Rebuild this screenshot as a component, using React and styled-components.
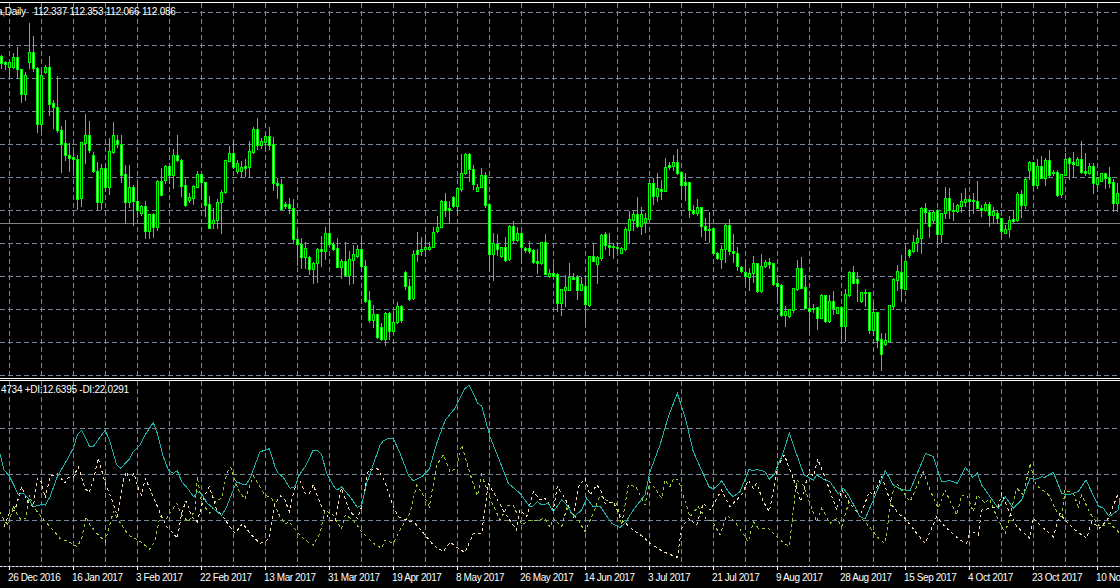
import React from 'react';
import styled, { createGlobalStyle } from 'styled-components';

const GlobalStyle = createGlobalStyle`
  html, body {
    margin: 0;
    background: #000;
    overflow: hidden;
  }
`

const Terminal = styled.div`
  width: 1120px;
  height: 588px;
  padding-top: 2px;
  box-sizing: border-box;
  background: #000;
  overflow: hidden;
  display: flex;
  flex-direction: column;
  font-family: "Liberation Sans", Arial, sans-serif;
  font-size: 10px;
  letter-spacing: -0.4px;
  color: #fff;
`

const PricePane = styled.div`
  position: relative;
  height: 375px;
  border-top: 1px solid #fff;
`

const IndicatorPane = styled.div`
  position: relative;
  height: 185px;
  border-top: 3px double #fff;
`

const ChartSvg = styled.svg`
  display: block;
  width: 1120px;
  height: 100%;
  shape-rendering: crispEdges;
`

const Legend = styled.div`
  position: absolute;
  top: 3px;
  left: ${props => props.$left}px;
  line-height: 12px;
  letter-spacing: -0.25px;
  white-space: pre;
`

const GridLine = styled.line`
  stroke: #778899;
  stroke-width: 1;
  stroke-dasharray: 5 3;
`

const BidLine = styled.line`
  stroke: #808080;
  stroke-width: 1;
`

const Wick = styled.line`
  stroke: #00ff00;
  stroke-width: 1;
`

const Body = styled.rect`
  fill: ${props => (props.$bear ? '#fff' : '#000')};
  stroke: #00ff00;
  stroke-width: 1;
`

const Trace = styled.polyline`
  fill: none;
  stroke: ${props => props.$color};
  stroke-width: 1;
  stroke-dasharray: ${props => (props.$dashed ? '3 3' : 'none')};
`

const TimeAxis = styled.div`
  display: flex;
  height: 22px;
  flex-shrink: 0;
  position: relative;
  background: repeating-linear-gradient(90deg, #dfe4ea 0 2px, #778899 2px 4px) top / 100% 1px no-repeat;
`

const TimeLabel = styled.div`
  position: relative;
  width: 64px;
  flex-shrink: 0;
  box-sizing: border-box;
  padding: 6px 0 0 8px;
  line-height: 12px;
  white-space: nowrap;

  &::before {
    content: '';
    position: absolute;
    left: 9px;
    top: 0;
    width: 1px;
    height: 4px;
    background: #fff;
  }
`

// bodyTop, bodyBottom, wickTop, wickBottom, bear - one row per daily bar, 4px apart
const candles = [
  [56,63,55,68,1],[62,64,61,69,1],[62,67,62,77,0],[57,67,53,68,0],[57,69,47,78,1],[69,94,69,102,1],[75,94,72,100,0],[52,62,23,68,0],
  [52,68,36,71,1],[68,124,67,132,1],[75,124,70,130,0],[67,72,65,73,0],[67,104,56,115,1],[103,107,100,128,1],[107,130,76,132,1],[130,144,126,172,1],
  [143,155,120,160,1],[155,158,143,171,1],[157,159,150,170,1],[159,199,155,209,1],[142,198,142,206,0],[135,143,114,163,0],[135,150,121,152,1],[155,171,152,172,1],
  [171,202,162,209,1],[168,202,164,209,0],[168,187,164,190,1],[151,187,138,194,0],[135,152,122,153,0],[140,144,135,147,1],[144,175,135,182,1],[174,202,165,223,1],
  [187,202,165,207,0],[187,201,185,225,1],[201,210,181,217,1],[206,213,205,215,0],[206,231,201,238,1],[214,231,214,238,0],[214,227,213,237,1],[181,227,180,230,0],
  [181,195,168,195,1],[166,180,165,183,0],[166,175,165,183,1],[155,175,149,188,0],[155,160,135,161,1],[160,186,159,196,1],[185,205,179,206,1],[197,200,193,202,0],
  [186,198,185,204,0],[174,187,171,187,0],[174,182,174,198,1],[182,205,182,216,1],[204,228,196,228,1],[220,223,208,228,0],[202,220,199,228,0],[192,202,190,233,0],
  [160,192,160,193,0],[153,161,146,161,0],[153,167,141,168,1],[163,171,160,173,0],[167,171,161,177,0],[166,168,159,176,1],[151,167,141,177,0],[129,152,127,153,0],
  [129,145,118,149,1],[141,145,138,148,0],[136,142,133,149,0],[136,145,127,149,1],[144,183,137,190,1],[183,185,178,198,1],[184,209,179,210,1],[204,206,202,208,1],
  [204,208,198,213,1],[208,239,199,243,1],[239,244,230,265,1],[244,257,238,268,1],[248,257,242,268,0],[257,269,256,274,1],[263,269,262,283,0],[249,263,248,282,0],
  [249,251,236,266,1],[233,251,227,259,0],[233,244,218,245,1],[244,249,242,250,1],[248,267,238,267,1],[261,267,259,278,0],[261,275,242,276,1],[259,275,251,284,0],
  [254,260,245,283,0],[249,256,245,257,0],[249,266,237,267,1],[266,301,260,302,1],[300,320,291,322,1],[314,320,305,327,0],[314,337,314,338,1],[327,339,323,340,1],
  [313,339,312,345,0],[313,331,312,339,1],[322,331,312,332,0],[306,322,302,323,0],[306,320,305,322,1],[272,286,271,289,1],[286,299,279,300,1],[254,298,250,299,0],
  [250,254,232,261,1],[249,251,237,255,0],[247,249,234,256,0],[247,249,242,250,0],[232,247,227,247,0],[227,231,216,232,0],[201,227,200,227,0],[201,210,193,216,1],
  [208,210,201,223,1],[197,206,196,207,1],[188,206,187,215,0],[173,189,154,191,0],[154,173,153,174,0],[154,169,153,181,1],[169,184,165,189,1],[187,191,184,191,0],
  [175,187,168,187,0],[175,205,172,207,1],[204,254,204,271,1],[243,254,233,280,0],[244,249,234,255,1],[247,256,247,257,0],[247,260,237,261,1],[226,259,225,260,0],
  [226,240,221,242,1],[233,240,227,241,0],[233,247,232,263,1],[248,250,247,252,1],[248,251,241,253,1],[250,262,249,263,1],[261,263,249,273,1],[242,263,242,264,0],
  [242,274,234,274,1],[273,276,269,277,0],[273,276,264,277,1],[274,303,273,311,1],[289,303,289,315,0],[287,290,275,306,0],[277,290,263,290,0],[277,279,273,279,1],
  [277,290,275,299,1],[284,290,277,290,0],[286,304,276,325,1],[256,305,256,306,0],[256,261,243,261,1],[257,264,256,283,0],[235,258,234,260,0],[234,245,232,249,1],
  [245,247,233,255,1],[246,247,243,258,1],[247,248,242,253,1],[248,253,247,253,0],[229,249,227,250,0],[219,230,211,243,0],[214,220,210,230,0],[214,226,197,227,1],
  [214,226,207,234,0],[218,222,213,232,0],[183,219,180,220,0],[183,196,178,204,1],[188,196,173,201,0],[189,191,180,199,1],[167,191,158,191,0],[165,167,162,169,1],
  [162,166,155,170,0],[162,173,149,174,1],[172,185,172,198,1],[182,185,173,200,1],[182,210,182,217,1],[210,213,205,214,1],[207,213,199,215,0],[207,226,207,236,1],
  [226,230,218,240,1],[229,230,212,242,1],[228,253,228,253,1],[253,258,252,259,1],[249,259,245,268,0],[225,249,224,262,0],[225,251,219,254,1],[251,253,234,262,1],
  [253,266,247,270,1],[267,271,266,272,1],[272,276,260,282,1],[273,277,268,290,0],[263,273,256,282,0],[263,291,263,292,1],[266,291,254,292,0],[262,266,260,267,0],
  [262,264,258,268,1],[263,284,263,285,1],[283,286,278,301,1],[285,315,284,316,1],[311,315,306,326,0],[309,316,309,317,0],[288,310,288,312,0],[268,289,260,290,0],
  [268,288,257,288,1],[287,308,275,308,1],[308,311,297,330,1],[308,309,304,312,1],[307,318,307,329,1],[295,318,294,318,0],[295,321,295,322,1],[301,321,295,322,0],
  [301,308,291,314,1],[307,313,307,313,0],[307,326,306,341,1],[294,326,289,341,0],[272,295,271,296,0],[272,283,266,283,1],[279,283,272,301,1],[292,301,292,302,0],
  [292,293,289,306,1],[292,330,292,333,1],[312,330,302,335,0],[312,340,312,347,1],[339,354,333,370,1],[340,344,333,345,0],[305,341,305,342,0],[279,306,278,309,0],
  [271,280,265,290,0],[272,288,255,301,1],[261,289,246,289,0],[250,255,249,257,1],[242,251,235,252,0],[238,242,229,251,0],[208,238,207,253,0],[208,212,203,222,1],
  [212,226,210,237,1],[212,220,210,222,0],[210,234,209,243,1],[213,234,213,242,0],[198,213,187,218,0],[198,210,188,218,1],[210,211,203,220,1],[205,211,204,212,0],
  [201,206,193,212,0],[199,202,188,206,0],[199,201,195,216,1],[200,201,193,213,1],[201,208,181,208,1],[208,210,205,216,1],[204,210,202,211,0],[204,215,202,226,1],
  [211,215,207,223,0],[213,218,210,223,1],[218,231,218,238,1],[229,233,225,233,0],[220,229,216,237,0],[219,221,210,222,1],[194,220,192,221,0],[194,205,190,217,1],
  [179,205,178,208,0],[162,170,161,179,0],[162,185,162,190,1],[166,185,159,188,0],[166,178,156,178,1],[160,178,158,185,0],[160,175,150,176,1],[172,173,170,175,1],
  [172,195,170,196,1],[174,194,174,197,0],[159,175,153,175,0],[158,163,157,179,1],[162,164,152,176,1],[159,165,157,165,0],[159,172,141,173,1],[171,173,153,175,1],
  [166,173,163,174,0],[166,183,163,193,1],[178,184,177,191,0],[173,181,173,181,0],[173,178,173,188,1],[177,183,167,187,1],[182,203,179,211,1],[193,203,183,211,0],
]

// traced in 3x crops: shift by the crop's left edge and scale back
const trace = (...parts) => parts
  .flatMap(([left, pts]) => pts.map(([x, y]) => `${(left + x / 3).toFixed(1)},${(370 + y / 3).toFixed(1)}`))
  .join(' ')

const adx = trace(
  [0, [[0,253],[12,300],[28,318],[55,373],[70,370],[85,385],[100,410],[124,404],[136,405],[150,380],[172,320],[195,280],[220,235],[232,195],[245,181],[268,228],[280,230],[295,208],[316,181],[330,215],[350,285],[362,295],[376,280],[388,268],[400,245],[420,225],[435,195],[460,158],[472,190],[490,260],[505,300],[520,310],[532,302],[545,335],[565,358],[582,382],[592,365],[605,370],[620,398],[640,415],[665,437],[680,410],[710,335],[725,342],[738,344],[750,325],[780,245],[795,241],[808,236],[825,290],[835,310],[850,322],[870,355],[885,350],[895,320]]],
  [300, [[15,290],[40,240],[52,240],[65,255],[80,310],[105,355],[112,360],[124,350],[150,380],[172,412],[185,405],[200,340],[240,225],[250,212],[265,205],[280,205],[300,250],[325,315],[340,333],[365,320],[388,298],[410,220],[436,150],[465,115],[495,55],[508,46],[520,70],[533,100],[545,108],[570,200],[590,250],[625,340],[660,370],[690,410],[700,408],[712,395],[725,405],[745,400],[760,425],[785,390],[800,405],[822,440],[845,420],[860,385],[880,410],[900,408]]],
  [600, [[35,460],[60,472],[75,460],[100,420],[135,375],[150,305],[180,225],[205,140],[232,70],[255,140],[280,245],[300,290],[327,350],[340,357],[355,345],[365,332],[385,365],[400,380],[420,365],[447,298],[460,303],[470,298],[495,305],[508,328],[525,310],[533,285],[545,262],[568,190],[585,240],[612,315],[640,330],[650,315],[675,330],[690,335],[715,372],[730,355],[745,375],[770,420]]],
  [860, [[0,440],[15,447],[40,390],[76,302],[100,345],[122,358],[150,362],[197,250],[220,260],[245,335],[270,332],[292,340],[316,292],[338,322],[352,310],[365,345],[415,415],[436,380],[460,415],[485,390],[510,325],[527,328],[545,320],[555,322],[580,307],[605,370],[625,375],[655,365],[678,330],[715,408],[730,415],[748,440],[775,420],[780,385]]],
)

const plusDi = trace(
  [0, [[12,470],[28,430],[45,420],[65,350],[85,400],[100,410],[112,325],[124,335],[136,385],[150,320],[172,310],[195,340],[205,322],[220,322],[235,290],[255,355],[268,368],[280,330],[295,265],[316,340],[340,400],[352,440],[370,330],[380,305],[388,330],[402,310],[415,355],[425,375],[436,325],[460,380],[485,440],[500,470],[520,490],[532,505],[545,430],[558,392],[575,440],[592,455],[612,380],[628,350],[640,385],[650,420],[665,435],[690,470],[705,490],[728,460],[750,490],[780,520],[795,515],[808,505],[825,400],[842,378],[855,390],[868,425],[880,370],[895,320]]],
  [300, [[15,370],[28,370],[40,345],[65,410],[90,450],[105,455],[124,355],[150,425],[172,445],[185,410],[205,300],[232,295],[255,335],[280,410],[295,440],[320,450],[345,460],[375,495],[400,525],[430,545],[450,517],[475,535],[495,548],[520,490],[545,490],[565,340],[590,385],[615,430],[650,480],[660,420],[680,440],[700,365],[720,390],[735,385],[760,420],[772,350],[795,385],[820,440],[835,350],[855,325],[870,375],[890,345],[900,355]]],
  [600, [[15,400],[40,395],[65,450],[100,480],[135,505],[150,520],[190,545],[232,562],[245,475],[265,445],[290,465],[310,400],[330,420],[365,360],[390,410],[425,375],[445,330],[460,355],[470,340],[490,395],[508,425],[533,290],[553,255],[580,325],[603,395],[628,300],[640,320],[653,268],[680,335],[710,420],[725,360],[750,400],[775,430]]],
  [860, [[0,440],[28,365],[40,375],[65,320],[95,405],[120,435],[135,445],[170,490],[195,520],[230,440],[255,470],[300,510],[320,520],[330,480],[355,495],[365,420],[390,415],[415,410],[425,370],[445,420],[470,470],[510,505],[520,445],[545,470],[580,500],[600,430],[615,450],[645,480],[680,505],[695,455],[720,475],[745,445],[775,370]]],
)

const minusDi = trace(
  [0, [[0,425],[12,450],[25,465],[40,408],[55,440],[65,450],[78,445],[88,375],[100,410],[124,440],[150,470],[180,505],[205,515],[232,530],[245,505],[258,440],[270,465],[295,495],[316,515],[340,425],[355,450],[385,495],[415,510],[450,538],[465,510],[480,440],[500,445],[530,400],[545,435],[565,455],[585,420],[592,320],[605,400],[630,430],[650,390],[665,385],[680,310],[692,292],[715,360],[735,388],[760,318],[795,375],[815,385],[840,440],[855,462],[868,455],[895,490]]],
  [300, [[15,510],[40,525],[60,490],[75,420],[100,435],[124,478],[136,435],[160,450],[185,485],[220,520],[245,535],[255,510],[280,520],[300,480],[330,430],[350,345],[375,385],[388,410],[410,285],[430,255],[450,305],[470,295],[485,225],[510,310],[532,378],[545,315],[570,385],[600,450],[625,405],[640,405],[665,465],[690,450],[712,450],[735,445],[750,472],[760,445],[785,470],[800,415],[835,450],[855,485],[880,430],[900,375]]],
  [600, [[25,395],[50,400],[65,465],[85,345],[108,350],[135,405],[150,335],[165,355],[185,385],[195,330],[210,350],[222,325],[235,330],[270,440],[295,410],[320,450],[335,450],[360,495],[380,435],[405,455],[445,515],[460,455],[475,475],[505,475],[540,510],[568,530],[590,330],[610,345],[650,455],[665,415],[690,460],[710,445],[725,470],[750,385]]],
  [860, [[0,440],[28,470],[60,510],[76,520],[95,375],[110,340],[125,360],[150,395],[190,305],[210,360],[235,415],[255,360],[290,435],[305,375],[320,375],[340,425],[352,375],[375,400],[388,385],[410,440],[436,490],[470,355],[490,375],[510,280],[527,345],[555,365],[570,380],[590,425],[605,445],[615,360],[640,370],[655,410],[665,375],[690,430],[720,470],[750,460],[780,490]]],
)

const dates = [
  '26 Dec 2016', '16 Jan 2017', '3 Feb 2017', '22 Feb 2017', '13 Mar 2017', '31 Mar 2017',
  '19 Apr 2017', '8 May 2017', '26 May 2017', '14 Jun 2017', '3 Jul 2017', '21 Jul 2017',
  '9 Aug 2017', '28 Aug 2017', '15 Sep 2017', '4 Oct 2017', '23 Oct 2017', '10 Nov 2017',
]

const verticals = Array.from({ length: 35 }, (_, i) => 9.5 + i * 32)

const Grid = ({ rows, top, bottom }) => (
  <g>
    {rows.map(y => <GridLine key={y} x1="0" x2="1120" y1={y + 0.5} y2={y + 0.5} />)}
    {verticals.map(x => <GridLine key={x} x1={x} x2={x} y1={top} y2={bottom} />)}
  </g>
)

const Candle = ({ index, row }) => {
  const [top, bottom, high, low, bear] = row
  const x = index * 4 + 1.5
  return (
    <g>
      <Wick x1={x} x2={x} y1={high} y2={low + 1} />
      <Body x={x - 1} y={top + 0.5} width="2" height={Math.max(bottom - top, 1)} $bear={bear} />
    </g>
  )
}

const App = () => (
  <Terminal>
    <GlobalStyle />
    <PricePane>
      <ChartSvg viewBox="0 3 1120 375">
        <Grid rows={[12, 45, 78, 111, 144, 177, 210, 243, 276, 309, 342, 375]} top={3} bottom={378} />
        <BidLine x1="0" x2="1120" y1="223.5" y2="223.5" />
        {candles.map((row, i) => <Candle key={i} index={i} row={row} />)}
      </ChartSvg>
      <Legend $left={-3}>{'a,Daily   112.337 112.353 112.066 112.086'}</Legend>
    </PricePane>
    <IndicatorPane>
      <ChartSvg viewBox="0 381 1120 185">
        <Grid rows={[428, 474, 520]} top={381} bottom={566} />
        <Trace points={minusDi} $color="#9acd32" $dashed />
        <Trace points={plusDi} $color="#f5deb3" $dashed />
        <Trace points={adx} $color="#20b2aa" />
      </ChartSvg>
      <Legend $left={1}>{'4734 +DI:12.6395 -DI:22.0291'}</Legend>
    </IndicatorPane>
    <TimeAxis>
      {dates.map(d => <TimeLabel key={d}>{d}</TimeLabel>)}
    </TimeAxis>
  </Terminal>
)

export default App;
